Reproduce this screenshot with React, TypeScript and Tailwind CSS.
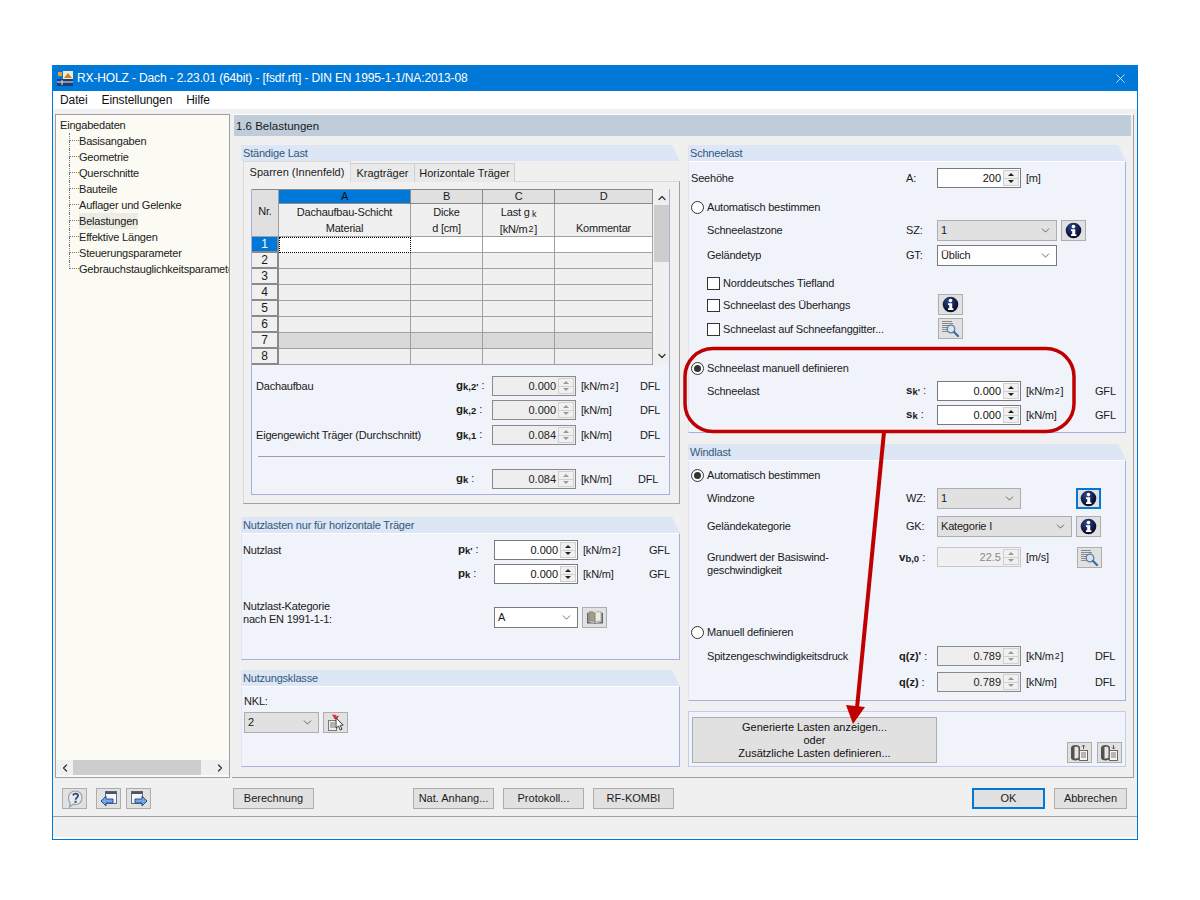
import type { ReactNode } from 'react';
import { ChevronDown, ChevronUp, ChevronLeft, ChevronRight, X } from 'lucide-react';

const treeItems = [
  'Basisangaben',
  'Geometrie',
  'Querschnitte',
  'Bauteile',
  'Auflager und Gelenke',
  'Belastungen',
  'Effektive Längen',
  'Steuerungsparameter',
  'Gebrauchstauglichkeitsparameter',
];

// --- Icons ---
function InfoIcon() {
  return (
    <svg width="17" height="17" viewBox="0 0 17 17">
      <defs>
        <radialGradient id="infoGrad" cx="0.4" cy="0.3" r="0.8">
          <stop offset="0" stopColor="#2f4a8c" />
          <stop offset="0.6" stopColor="#0e1a44" />
          <stop offset="1" stopColor="#03050f" />
        </radialGradient>
      </defs>
      <circle cx="8.5" cy="8.5" r="7.8" fill="url(#infoGrad)" />
      <circle cx="8.5" cy="4.6" r="1.8" fill="#fff" />
      <path d="M6 7.200h4.200v5h1.200v1.800H6v-1.800h1.200V9H6z" fill="#fff" />
    </svg>
  );
}

function SearchDocIcon() {
  return (
    <svg width="19" height="17" viewBox="0 0 19 17" fill="none">
      <path d="M1 1.500h10M1 3.500h11M1 5.500h7M1 7.500h5M1 9.500h5M1 11.500h6" stroke="#8a8a8a" />
      <circle cx="10" cy="9" r="3.800" fill="#d5e4f2" stroke="#5f7c9f" strokeWidth="1.300" />
      <path d="M13 12l4 4" stroke="#3a66a3" strokeWidth="2.200" strokeLinecap="round" />
    </svg>
  );
}

function BookIcon() {
  return (
    <svg width="18" height="15" viewBox="0 0 18 15" fill="none">
      <path d="M1 13.500V3l1.500-.5v9.500l6.500 1 6.500-1V2.500L17 3v10.500H10l-1 .8-1-.8z" fill="#5c6478" />
      <path d="M3 2c2-.6 4.300-.5 5.600 1v9.300C7.200 11 5 10.800 3 11.300z" fill="#a39c88" stroke="#6f6a5e" strokeWidth="0.5" />
      <path d="M15 2c-2-.6-4.300-.5-5.600 1v9.300c1.400-1.300 3.600-1.500 5.600-1z" fill="#f0ecdf" stroke="#77736a" strokeWidth="0.5" />
    </svg>
  );
}

function PinCursorIcon() {
  return (
    <svg width="20" height="19" viewBox="0 0 20 19" fill="none">
      <rect x="2.500" y="7.500" width="8" height="10" fill="#eeeeee" stroke="#777" />
      <path d="M4 10h5M4 12h5M4 14h5" stroke="#777" />
      <path d="M6 1.500l4.500.5-1 1.500 3.500-1-1.500 3-3 .5z" fill="#d8333a" />
      <path d="M10 5l0 10 2.500-2 1.800 4 1.700-.8-1.800-3.800 3-.4z" fill="#fff" stroke="#222" strokeWidth="0.9" />
    </svg>
  );
}

function HelpIcon() {
  return (
    <svg width="18" height="18" viewBox="0 0 18 18" fill="none">
      <path d="M9.500 1c3.800 0 6.500 2.800 6.500 6.700s-2.700 6.800-6.500 6.800c-.8 0-1.500-.1-2.200-.3L3.500 17l.8-3.800C3 12 2.500 10 2.500 7.700 2.500 3.800 5.500 1 9.500 1z" fill="#e8ebef" stroke="#9aa1ab" strokeWidth="1.200" />
      <path d="M7 5.500C7.500 4.200 8.400 3.700 9.600 3.700c1.500 0 2.400.9 2.400 2 0 1.800-2.400 2-2.400 4" stroke="#2f4474" strokeWidth="1.800" />
      <rect x="8.600" y="10.800" width="2" height="2" fill="#2f4474" />
    </svg>
  );
}

function NavIcon({ dir }: { dir: 'left' | 'right' }) {
  return (
    <svg width="18" height="18" viewBox="0 0 18 18" fill="none">
      {dir === 'left' ? (
        <>
          <rect x="5.500" y="1.500" width="11" height="12" fill="#f4f6fa" stroke="#667084" />
          <rect x="5.500" y="1.500" width="11" height="2.500" fill="#4c5568" />
          <path d="M1 11l5-5v3h7v4H6v3z" fill="#6fa8e8" stroke="#1e3f80" strokeWidth="0.9" />
        </>
      ) : (
        <>
          <rect x="1.500" y="1.500" width="11" height="12" fill="#f4f6fa" stroke="#667084" />
          <rect x="1.500" y="1.500" width="11" height="2.500" fill="#4c5568" />
          <path d="M17 11l-5-5v3H5v4h7v3z" fill="#6fa8e8" stroke="#1e3f80" strokeWidth="0.9" />
        </>
      )}
    </svg>
  );
}

function CylinderDocIcon({ up }: { up?: boolean }) {
  return (
    <svg width="19" height="18" viewBox="0 0 19 18" fill="none">
      <path d="M1 3.500C1 2 3 1 5.500 1S10 2 10 3.500v10.500c0 1.500-2 2.500-4.500 2.500S1 15.500 1 14z" fill="#55524e" />
      <path d="M4.500 3c2-.7 3.500 0 4 .8v9.700c-.8.9-2.500 1.300-4 1z" fill="#e9e6df" />
      <rect x="9.500" y="6.500" width="8" height="10" fill="#f5f5f5" stroke="#666" />
      <path d="M11 9h5M11 11h5M11 13h5" stroke="#777" />
      {up ? <path d="M13.500 1v4M12 2.500L13.500 1 15 2.500" stroke="#555" /> : <path d="M13.500 1v4M12 3.500L13.500 5 15 3.500" stroke="#555" />}
    </svg>
  );
}

function AppLogo() {
  return (
    <svg width="16" height="15" viewBox="0 0 16 15" className="mr-[4px]">
      <rect x="0" y="8" width="16" height="7" fill="#1f3f74" />
      <rect x="6" y="0" width="10" height="8" fill="#f4ead2" />
      <path d="M7 7l4-5 4 5z" fill="#c9812c" />
      <rect x="1" y="1" width="4" height="4" fill="#d9a441" />
      <path d="M0 11h16M5 9v5" stroke="#e4ecf7" />
    </svg>
  );
}

// --- Controls ---
function IconButton({ children, className = '', focused }: { children: ReactNode; className?: string; focused?: boolean }) {
  return (
    <button
      className={`w-[25px] h-[21px] flex items-center justify-center bg-[#e1e1e1] shrink-0 ${
        focused ? 'border-2 border-[#0078d7]' : 'border border-[#adadad]'
      } ${className}`}
    >
      {children}
    </button>
  );
}

function Spin({ value, kind = 'edit' }: { value: string; kind?: 'edit' | 'readonly' | 'disabled' }) {
  const box =
    kind === 'edit'
      ? 'bg-white border-[#7a7a7a] text-[#111]'
      : kind === 'readonly'
        ? 'bg-[#eeeeee] border-[#8a8a8a] text-[#222]'
        : 'bg-[#f0f0f0] border-[#c8c8c8] text-[#888]';
  const arrow = kind === 'edit' ? 'text-[#222]' : 'text-[#9a9a9a]';
  return (
    <div className={`w-[84px] h-[20px] flex items-center border shrink-0 tracking-normal ${box}`}>
      <span className="flex-1 text-right pr-[2px] leading-[18px]">{value}</span>
      <div className={`w-[16px] h-[16px] mr-[1px] flex flex-col bg-[#f0f0f0] border border-[#d0d0d0] ${arrow}`}>
        <span className="flex-1 flex items-center justify-center">
          <span className="w-0 h-0 border-x-[3px] border-x-transparent border-b-[3px] border-b-current" />
        </span>
        <span className="flex-1 flex items-center justify-center border-t border-[#d0d0d0]">
          <span className="w-0 h-0 border-x-[3px] border-x-transparent border-t-[3px] border-t-current" />
        </span>
      </div>
    </div>
  );
}

function Select({ value, className, white }: { value: string; className: string; white?: boolean }) {
  return (
    <div
      className={`h-[21px] flex items-center justify-between pl-[3px] pr-[4px] border shrink-0 ${
        white ? 'bg-white border-[#7a7a7a]' : 'bg-[#e1e1e1] border-[#adadad]'
      } ${className}`}
    >
      <span>{value}</span>
      <ChevronDown size={13} strokeWidth={1.3} className="text-[#333]" />
    </div>
  );
}

function Radio({ checked, label }: { checked?: boolean; label: string }) {
  return (
    <div className="h-[16px] flex items-center">
      <span className="w-[13px] h-[13px] mr-[3px] rounded-full border border-[#333] bg-white flex items-center justify-center shrink-0">
        {checked && <span className="w-[7px] h-[7px] rounded-full bg-[#333]" />}
      </span>
      <span>{label}</span>
    </div>
  );
}

function Check({ label, className = '' }: { label: string; className?: string }) {
  return (
    <div className={`flex items-center ${className}`}>
      <span className="w-[13px] h-[13px] mr-[3px] border border-[#333] bg-white shrink-0" />
      <span>{label}</span>
    </div>
  );
}

function Sym({ base, sub }: { base: string; sub?: string }) {
  return (
    <span className="whitespace-nowrap tracking-normal">
      <span className="font-bold text-[11.5px]">{base}</span>
      {sub && <span className="font-bold text-[9.5px] relative top-[1px]">{sub}</span>}
      <span className="ml-[3px] font-normal">:</span>
    </span>
  );
}

function M2() {
  return (
    <span className="whitespace-nowrap">
      [kN/m<sup className="text-[9px] relative -top-[1px] mx-[1px]">2</sup>]
    </span>
  );
}

// Zeile mit Beschriftung, Symbol, Eingabefeld, Einheit und Quelle
function LoadRow({
  label,
  sym,
  value,
  unit,
  src,
  kind,
  labelClass,
  symClass,
  unitClass,
  className = '',
}: {
  label?: ReactNode;
  sym: ReactNode;
  value: string;
  unit: ReactNode;
  src?: string;
  kind?: 'edit' | 'readonly' | 'disabled';
  labelClass: string;
  symClass: string;
  unitClass: string;
  className?: string;
}) {
  return (
    <div className={`flex items-center h-[20px] ${className}`}>
      <div className={`shrink-0 ${labelClass}`}>{label}</div>
      <div className={`shrink-0 ${symClass}`}>{sym}</div>
      <Spin value={value} kind={kind} />
      <div className={`ml-[5px] shrink-0 ${unitClass}`}>{unit}</div>
      {src && <div>{src}</div>}
    </div>
  );
}

function GroupHeader({ title }: { title: string }) {
  return (
    <div className="h-[16px] leading-[16px] pl-[2px] shrink-0 bg-[#dce6f4] text-[#33587c] [clip-path:polygon(0_0,calc(100%-8px)_0,100%_100%,0_100%)]">
      {title}
    </div>
  );
}

function Group({ title, className, children }: { title: string; className: string; children: ReactNode }) {
  return (
    <div className={`flex flex-col ${className}`}>
      <GroupHeader title={title} />
      <div className="flex-1 bg-[#f0f3f9] border-r border-b border-[#a9aee0] border-l border-l-[#dfe5f2] border-t border-t-white pl-[1px]">
        {children}
      </div>
    </div>
  );
}

// --- Tabelle ---
const gridCols = 'grid grid-cols-[27px_132px_72px_72px_98px]';

function RowHead({ n, active }: { n: number; active?: boolean }) {
  return (
    <div
      className={`h-[16px] leading-[15px] text-[12px] text-center border-r-2 border-b-2 border-[#8a8a8a] ${
        active ? 'bg-[#0078d7] text-white' : 'bg-[#f0f0f0]'
      }`}
    >
      {n}
    </div>
  );
}

function DataGrid() {
  const rows = [1, 2, 3, 4, 5, 6, 7, 8];
  return (
    <div className="flex h-[176px] w-[417px]">
      <div className="w-[401px] shrink-0 overflow-hidden border-t border-[#8a8a8a] bg-[#f0f0f0]">
        <div className={gridCols}>
          <div className="row-span-2 bg-[#e0e0e0] border-r border-b border-[#a0a0a0] text-center pt-[13px]">Nr.</div>
          <div className="h-[14px] leading-[13px] bg-[#0078d7] text-center text-[#111] border-r border-b border-[#8a8a8a]">A</div>
          <div className="h-[14px] leading-[13px] bg-[#e0e0e0] text-center border-r border-b border-[#8a8a8a]">B</div>
          <div className="h-[14px] leading-[13px] bg-[#e0e0e0] text-center border-r border-b border-[#8a8a8a]">C</div>
          <div className="h-[14px] leading-[13px] bg-[#e0e0e0] text-center border-r border-b border-[#8a8a8a]">D</div>
          <div className="h-[33px] leading-[16px] text-center border-r border-b border-[#a0a0a0]">
            Dachaufbau-Schicht
            <br />
            Material
          </div>
          <div className="h-[33px] leading-[16px] text-center border-r border-b border-[#a0a0a0]">
            Dicke
            <br />d [cm]
          </div>
          <div className="h-[33px] leading-[16px] text-center border-r border-b border-[#a0a0a0]">
            Last g<span className="text-[9px] relative top-[1px]"> k</span>
            <br />
            <M2 />
          </div>
          <div className="h-[33px] leading-[16px] text-center border-r border-b border-[#a0a0a0] pt-[16px]">Kommentar</div>
          {rows.map((n) => {
            const cell = `h-[16px] border-r border-b border-[#a0a0a0] ${
              n === 1 ? 'bg-white' : n === 7 ? 'bg-[#d9d9d9]' : 'bg-[#f0f0f0]'
            }`;
            return (
              <div key={n} className="contents">
                <RowHead n={n} active={n === 1} />
                <div className={n === 1 ? 'h-[16px] bg-white border border-dotted border-black' : cell} />
                <div className={cell} />
                <div className={cell} />
                <div className={cell} />
              </div>
            );
          })}
        </div>
      </div>
      <div className="w-[15px] ml-[1px] flex flex-col items-center bg-[#f0f0f0]">
        <ChevronUp size={12} strokeWidth={2.5} className="mt-[3px] text-[#333] shrink-0" />
        <div className="w-full h-[57px] mt-[1px] bg-[#cdcdcd] shrink-0" />
        <div className="flex-1" />
        <ChevronDown size={12} strokeWidth={2.5} className="mb-[3px] text-[#333] shrink-0" />
      </div>
    </div>
  );
}

function StaendigeLast() {
  const labelClass = 'w-[203px] pl-[3px]';
  const symClass = 'w-[36px]';
  const unitClass = 'w-[59px]';
  return (
    <div className="h-[359px] flex flex-col">
      <GroupHeader title="Ständige Last" />
      <div className="flex ml-[2px] h-[21px] items-end relative z-10 whitespace-nowrap tracking-normal">
        <div className="w-[108px] h-[21px] leading-[21px] text-center bg-[#f0f0f0] border-t border-x border-[#d9d9d9]">Sparren (Innenfeld)</div>
        <div className="w-[64px] h-[19px] leading-[19px] text-center bg-[#e9e9e9] border-t border-r border-[#cfcfcf]">Kragträger</div>
        <div className="w-[100px] h-[19px] leading-[19px] text-center bg-[#e9e9e9] border-t border-r border-[#cfcfcf]">Horizontale Träger</div>
      </div>
      <div className="flex-1 ml-[2px] -mt-px bg-[#f0f0f0] border border-[#d9d9d9] border-r-[#a0a0a0] border-b-[#a0a0a0] pl-[7px] pt-[7px]">
        <div className="w-[419px] h-[306px] bg-[#f0f3f9] border-r border-b border-l border-[#a9aee0]">
          <DataGrid />
          <div className="pt-[11px] pl-[1px]">
            <LoadRow label="Dachaufbau" sym={<Sym base="g" sub="k,2'" />} value="0.000" kind="readonly" unit={<M2 />} src="DFL" labelClass={labelClass} symClass={symClass} unitClass={unitClass} />
            <LoadRow className="mt-[4px]" sym={<Sym base="g" sub="k,2" />} value="0.000" kind="readonly" unit="[kN/m]" src="DFL" labelClass={labelClass} symClass={symClass} unitClass={unitClass} />
            <LoadRow className="mt-[5px]" label="Eigengewicht Träger (Durchschnitt)" sym={<Sym base="g" sub="k,1" />} value="0.084" kind="readonly" unit="[kN/m]" src="DFL" labelClass={labelClass} symClass={symClass} unitClass={unitClass} />
            <div className="h-px bg-[#a0a0a0] mt-[11px] ml-[5px] w-[407px]" />
            <LoadRow className="mt-[12px]" sym={<Sym base="g" sub="k" />} value="0.084" kind="readonly" unit="[kN/m]" src="DFL" labelClass={labelClass} symClass={symClass} unitClass="w-[57px]" />
          </div>
        </div>
      </div>
    </div>
  );
}

function Nutzlasten() {
  const labelClass = 'w-[215px]';
  const symClass = 'w-[36px]';
  const unitClass = 'w-[66px]';
  return (
    <Group title="Nutzlasten nur für horizontale Träger" className="h-[143px] mt-[13px]">
      <div className="pt-[6px]">
        <LoadRow label="Nutzlast" sym={<Sym base="p" sub="k'" />} value="0.000" unit={<M2 />} src="GFL" labelClass={labelClass} symClass={symClass} unitClass={unitClass} />
        <LoadRow className="mt-[4px]" sym={<Sym base="p" sub="k" />} value="0.000" unit="[kN/m]" src="GFL" labelClass={labelClass} symClass={symClass} unitClass={unitClass} />
        <div className="flex items-start h-[21px] mt-[23px]">
          <div className="w-[251px] leading-[13px] -mt-[7px] shrink-0">
            Nutzlast-Kategorie
            <br />
            nach EN 1991-1-1:
          </div>
          <Select value="A" className="w-[84px]" white />
          <IconButton className="ml-[4px]">
            <BookIcon />
          </IconButton>
        </div>
      </div>
    </Group>
  );
}

function Nutzungsklasse() {
  return (
    <Group title="Nutzungsklasse" className="h-[97px] mt-[10px]">
      <div className="pt-[8px] pl-[1px]">
        <div className="h-[13px] leading-[13px]">NKL:</div>
        <div className="flex items-center mt-[4px]">
          <Select value="2" className="w-[75px]" />
          <IconButton className="ml-[4px] w-[24px]">
            <PinCursorIcon />
          </IconButton>
        </div>
      </div>
    </Group>
  );
}

function Schneelast() {
  const labelClass = 'w-[215px] pl-[16px]';
  const symClass = 'w-[31px]';
  const unitClass = 'w-[69px]';
  return (
    <Group title="Schneelast" className="h-[288px]">
      <div className="pt-[6px] pl-[1px]">
        <LoadRow label={<span className="-ml-[16px]">Seehöhe</span>} sym={<span>A:</span>} value="200" unit="[m]" labelClass={labelClass} symClass={symClass} unitClass={unitClass} />
        <div className="mt-[11px]">
          <Radio label="Automatisch bestimmen" />
        </div>
        <div className="flex items-center h-[21px] mt-[5px]">
          <div className={`shrink-0 ${labelClass}`}>Schneelastzone</div>
          <div className={`shrink-0 ${symClass}`}>SZ:</div>
          <Select value="1" className="w-[120px]" />
          <IconButton className="ml-[4px]">
            <InfoIcon />
          </IconButton>
        </div>
        <div className="flex items-center h-[21px] mt-[3px] pt-[1px]">
          <div className={`shrink-0 ${labelClass}`}>Geländetyp</div>
          <div className={`shrink-0 ${symClass}`}>GT:</div>
          <Select value="Üblich" className="w-[120px]" white />
        </div>
        <Check label="Norddeutsches Tiefland" className="h-[16px] mt-[10px] ml-[16px]" />
        <div className="flex items-center h-[21px] mt-[3px]">
          <Check label="Schneelast des Überhangs" className="w-[231px] ml-[16px] pt-[2px]" />
          <IconButton>
            <InfoIcon />
          </IconButton>
        </div>
        <div className="flex items-center h-[21px] mt-[3px]">
          <Check label="Schneelast auf Schneefanggitter..." className="w-[231px] ml-[16px] pt-[1px]" />
          <IconButton>
            <SearchDocIcon />
          </IconButton>
        </div>
        <div className="mt-[21px]">
          <Radio checked label="Schneelast manuell definieren" />
        </div>
        <LoadRow className="mt-[5px]" label="Schneelast" sym={<Sym base="s" sub="k'" />} value="0.000" unit={<M2 />} src="GFL" labelClass={labelClass} symClass={symClass} unitClass={unitClass} />
        <LoadRow className="mt-[4px]" sym={<Sym base="s" sub="k" />} value="0.000" unit="[kN/m]" src="GFL" labelClass={labelClass} symClass={symClass} unitClass={unitClass} />
      </div>
    </Group>
  );
}

function Windlast() {
  const labelClass = 'w-[215px] pl-[16px]';
  const symClass = 'w-[31px]';
  const unitClass = 'w-[69px]';
  return (
    <Group title="Windlast" className="h-[257px] mt-[11px]">
      <div className="pt-[6px] pl-[1px]">
        <Radio checked label="Automatisch bestimmen" />
        <div className="flex items-center h-[21px] mt-[5px]">
          <div className={`shrink-0 ${labelClass}`}>Windzone</div>
          <div className={`shrink-0 ${symClass}`}>WZ:</div>
          <Select value="1" className="w-[84px]" />
          <IconButton className="ml-[55px]" focused>
            <InfoIcon />
          </IconButton>
        </div>
        <div className="flex items-center h-[21px] mt-[7px]">
          <div className={`shrink-0 ${labelClass}`}>Geländekategorie</div>
          <div className={`shrink-0 ${symClass}`}>GK:</div>
          <Select value="Kategorie I" className="w-[135px]" />
          <IconButton className="ml-[4px]">
            <InfoIcon />
          </IconButton>
        </div>
        <div className="flex items-start h-[21px] mt-[10px]">
          <div className={`shrink-0 leading-[13px] pt-[4px] ${labelClass}`}>
            Grundwert der Basiswind-
            <br />
            geschwindigkeit
          </div>
          <div className="shrink-0 pt-[2px] -ml-[7px] w-[38px]">
            <Sym base="v" sub="b,0" />
          </div>
          <Spin value="22.5" kind="disabled" />
          <div className="ml-[5px] w-[51px] shrink-0 pt-[2px]">[m/s]</div>
          <IconButton>
            <SearchDocIcon />
          </IconButton>
        </div>
        <div className="mt-[56px]">
          <Radio label="Manuell definieren" />
        </div>
        <LoadRow className="mt-[6px]" label="Spitzengeschwindigkeitsdruck" sym={<span className="-ml-[7px] font-bold whitespace-nowrap tracking-normal">q(z)'<span className="font-normal ml-[3px]">:</span></span>} value="0.789" kind="readonly" unit={<M2 />} src="DFL" labelClass={labelClass} symClass={symClass} unitClass={unitClass} />
        <LoadRow className="mt-[6px]" sym={<span className="-ml-[7px] font-bold whitespace-nowrap tracking-normal">q(z)<span className="font-normal ml-[3px]">:</span></span>} value="0.789" kind="readonly" unit="[kN/m]" src="DFL" labelClass={labelClass} symClass={symClass} unitClass={unitClass} />
      </div>
    </Group>
  );
}

function GenerateBox() {
  return (
    <div className="h-[56px] mt-[10px] bg-[#f0f3f9] border border-[#c6cbee] flex justify-between pl-[3px] pr-[3px] pt-[5px]">
      <button className="w-[245px] h-[46px] bg-[#e1e1e1] border border-[#adadad] leading-[13px] text-center text-[#111] tracking-normal">
        Generierte Lasten anzeigen...
        <br />
        oder
        <br />
        Zusätzliche Lasten definieren...
      </button>
      <div className="flex gap-[5px] items-end mb-[3px]">
        <IconButton>
          <CylinderDocIcon up />
        </IconButton>
        <IconButton>
          <CylinderDocIcon />
        </IconButton>
      </div>
    </div>
  );
}

function Tree() {
  return (
    <div className="w-[175px] shrink-0 flex flex-col bg-[#fbfbf3] border border-[#a0a0a0]">
      <div className="flex-1 pt-[2px] overflow-hidden">
        <div className="h-[16px] leading-[16px] pl-[4px]">Eingabedaten</div>
        {treeItems.map((item, i) => (
          <div key={item} className="h-[16px] flex pl-[13px] whitespace-nowrap">
            <div className="w-[10px] shrink-0">
              <div className="h-[8px] border-l border-b border-dotted border-[#777]" />
              {i < treeItems.length - 1 && <div className="h-[8px] border-l border-dotted border-[#777]" />}
            </div>
            <span className={`leading-[16px] ${item === 'Belastungen' ? 'bg-[#ecece4]' : ''}`}>{item}</span>
          </div>
        ))}
      </div>
      <div className="h-[15px] mb-[2px] flex items-center bg-[#f0f0f0] shrink-0">
        <ChevronLeft size={12} strokeWidth={2.5} className="ml-[3px] text-[#333]" />
        <div className="ml-[2px] w-[128px] h-full bg-[#cdcdcd]" />
        <div className="flex-1" />
        <ChevronRight size={12} strokeWidth={2.5} className="mr-[3px] text-[#333]" />
      </div>
    </div>
  );
}

function FooterButton({ label, className, focused }: { label: string; className: string; focused?: boolean }) {
  return (
    <button
      className={`h-[21px] bg-[#e1e1e1] text-center shrink-0 tracking-normal ${focused ? 'border-2 border-[#0078d7]' : 'border border-[#adadad]'} ${className}`}
    >
      {label}
    </button>
  );
}

function Footer() {
  return (
    <div className="h-[38px] shrink-0 flex items-start pt-[10px] pl-[9px]">
      <IconButton>
        <HelpIcon />
      </IconButton>
      <IconButton className="ml-[9px]">
        <NavIcon dir="left" />
      </IconButton>
      <IconButton className="ml-[5px]">
        <NavIcon dir="right" />
      </IconButton>
      <FooterButton label="Berechnung" className="w-[81px] ml-[82px]" />
      <FooterButton label="Nat. Anhang..." className="w-[81px] ml-[99px]" />
      <FooterButton label="Protokoll..." className="w-[81px] ml-[9px]" />
      <FooterButton label="RF-KOMBI" className="w-[81px] ml-[9px]" />
      <FooterButton label="OK" className="w-[73px] ml-[298px]" focused />
      <FooterButton label="Abbrechen" className="w-[73px] ml-[9px]" />
    </div>
  );
}

export default function App() {
  return (
    <div className="relative w-[1200px] h-[900px] bg-white pl-[52px] pt-[65px] overflow-hidden text-[11px] tracking-[-0.2px] text-[#1a1a1a] font-['Liberation_Sans',sans-serif]">
      <div className="w-[1086px] h-[775px] flex flex-col bg-[#f0f0f0] border-x border-b border-[#0078d7]">
        {/* Titelleiste */}
        <div className="h-[26px] shrink-0 -mx-px bg-[#0078d7] text-white text-[12px] tracking-[-0.13px] flex items-center pl-[5px] pr-[10px]">
          <AppLogo />
          <span className="flex-1">RX-HOLZ - Dach - 2.23.01 (64bit) - [fsdf.rft] - DIN EN 1995-1-1/NA:2013-08</span>
          <X size={15} strokeWidth={1.2} />
        </div>
        {/* Menü */}
        <div className="h-[18px] shrink-0 bg-white flex items-center gap-[14px] pl-[7px] text-[12px] tracking-[-0.1px] text-[#111]">
          <span>Datei</span>
          <span>Einstellungen</span>
          <span>Hilfe</span>
        </div>
        {/* Hauptbereich */}
        <div className="h-[669px] shrink-0 flex pt-[5px] pl-[2px] gap-[2px]">
          <Tree />
          <div className="w-[902px] shrink-0 border-r border-b border-t border-[#a0a0a0] border-t-white">
            <div className="h-[21px] ml-[2px] mr-[2px] bg-[#bfccd9] leading-[22px] pl-[2px] text-[11.5px] tracking-normal">1.6 Belastungen</div>
            <div className="flex pl-[9px] pt-[9px] gap-[8px]">
              <div className="w-[439px] shrink-0">
                <StaendigeLast />
                <Nutzlasten />
                <Nutzungsklasse />
              </div>
              <div className="w-[438px] shrink-0">
                <Schneelast />
                <Windlast />
                <GenerateBox />
              </div>
            </div>
          </div>
        </div>
        <Footer />
        {/* Statusleiste */}
        <div className="flex-1 border-t border-[#a0a0a0] border-b-2 border-b-white" />
      </div>

      {/* Rote Markierung */}
      <svg className="absolute inset-0 pointer-events-none" width="1200" height="900" fill="none">
        <rect x="685" y="348.500" width="389" height="83" rx="28" stroke="#c00000" strokeWidth="3.500" />
        <path d="M884 432L857 708" stroke="#c00000" strokeWidth="4" />
        <path d="M846 705L865 707L853 724Z" fill="#c00000" />
      </svg>
    </div>
  );
}
